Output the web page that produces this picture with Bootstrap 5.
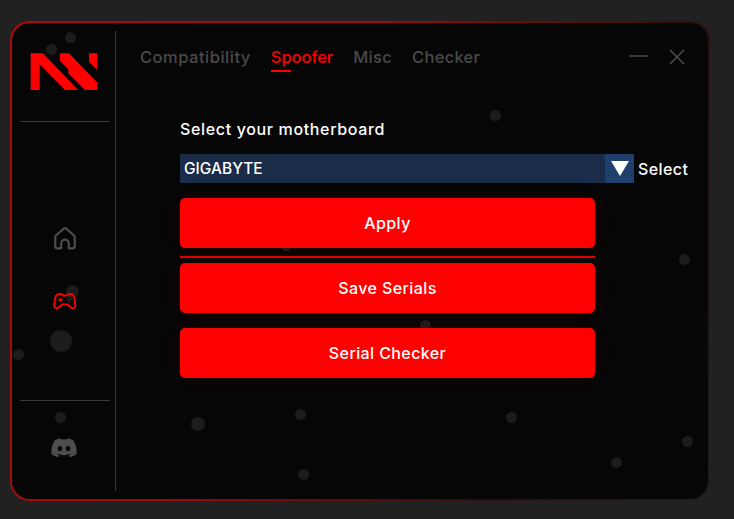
<!DOCTYPE html>
<html lang="en">
<head>
    <meta charset="UTF-8">
    <title>Spoofer</title>
    <link rel="stylesheet" href="https://cdn.jsdelivr.net/npm/bootstrap@5.3.0/dist/css/bootstrap.min.css">
    <style>
        body {
            background: #212121;
            font-family: "Inter", "Open Sans", sans-serif;
            color: #fff;
            height: 519px;
            overflow: hidden;
            padding: 21px 24px 18px 10px;
        }

        .app-window {
            position: relative;
            width: 700px;
            height: 480px;
            border: 2px solid transparent;
            border-radius: 20px;
            background:
                linear-gradient(#060606, #060606) padding-box,
                linear-gradient(115deg, #b00808 0%, #a00a0a 40%, #2a1010 75%, #1e1e1e 100%) border-box;
            overflow: hidden;
        }

        .dot {
            position: absolute;
            border-radius: 50%;
            background: #1c1c1c;
        }

        .side-col {
            position: relative;
            width: 104px;
            height: 460px;
            margin-top: 8px;
            border-right: 1px solid #3a3a3a;
        }

        .logo-box { height: 91px; padding: 22px 0 0 10px; border-bottom: 1px solid #3a3a3a; margin-left: 8px; width: 90px; }
        .logo-box svg { display: block; }

        .side-icons { height: 279px; border-bottom: 1px solid #3a3a3a; margin-left: 8px; width: 90px; padding: 103px 1px 0 0; }
        .pad-icon { margin-top: 39px; }
        .side-bottom { margin-left: 8px; width: 90px; padding: 37px 2px 0 0; }

        .main-col { position: relative; }

        .tab-bar { height: 62px; padding: 22px 23px 0 24px; }
        .tab-nav { gap: 20px; }
        .tab-link {
            color: #4a4a4a;
            font-size: 16.5px;
            font-weight: 450;
            letter-spacing: .3px;
            text-decoration: none;
            position: relative;
            line-height: 24px;
        }
        .tab-link:first-child { letter-spacing: .5px; }
        .tab-link.on { color: #f00; letter-spacing: -.05px; }
        .tab-link.on::after {
            content: "";
            position: absolute;
            left: 0;
            top: 25px;
            width: 20px;
            height: 2px;
            background: #f00;
        }
        .win-btns { gap: 21px; height: 24px; }

        .form-area { width: 520px; margin: 33px 0 0 64px; }
        .form-label-text { font-size: 16px; font-weight: 450; letter-spacing: .65px; line-height: 22px; margin-bottom: 14px; }

        .select-row { margin-bottom: 15px; }
        .board-select { height: 29px; width: 454px; background: #1b2c48; font-size: 15.5px; font-weight: 450; padding-left: 4px; }
        .board-name { padding-top: 1px; }
        .arrow-box { width: 29px; height: 29px; background: #1f3f6c; }
        .select-text { font-size: 16px; font-weight: 450; letter-spacing: .4px; margin-left: 4px; }

        .red-btn {
            display: block;
            width: 415px;
            height: 50px;
            background: #f00;
            border: 0;
            border-radius: 5px;
            color: #fff;
            font-size: 16px;
            font-weight: 450;
            letter-spacing: .4px;
            box-shadow: 0 0 18px rgba(255, 0, 0, .09);
        }
        .red-btn:hover, .red-btn:active { background: #f00 !important; color: #fff !important; }
        .btn-gap { margin-bottom: 15px; }

        .red-rule { width: 415px; height: 2px; background: #e00000; margin: 8px 0 5px; }
    </style>
</head>
<body>
    <div class="app-window d-flex">
        <span class="dot" style="left:34px;top:21px;width:11px;height:11px"></span>
        <span class="dot" style="left:53px;top:9px;width:11px;height:11px"></span>
        <span class="dot" style="left:478px;top:87px;width:11px;height:11px"></span>
        <span class="dot" style="left:269px;top:217px;width:11px;height:11px"></span>
        <span class="dot" style="left:667px;top:231px;width:11px;height:11px"></span>
        <span class="dot" style="left:54px;top:262px;width:13px;height:13px"></span>
        <span class="dot" style="left:38px;top:307px;width:22px;height:22px"></span>
        <span class="dot" style="left:1px;top:326px;width:11px;height:11px"></span>
        <span class="dot" style="left:408px;top:297px;width:11px;height:11px"></span>
        <span class="dot" style="left:43px;top:389px;width:11px;height:11px"></span>
        <span class="dot" style="left:179px;top:394px;width:14px;height:14px"></span>
        <span class="dot" style="left:283px;top:386px;width:11px;height:11px"></span>
        <span class="dot" style="left:494px;top:389px;width:11px;height:11px"></span>
        <span class="dot" style="left:670px;top:413px;width:11px;height:11px"></span>
        <span class="dot" style="left:599px;top:434px;width:11px;height:11px"></span>
        <span class="dot" style="left:286px;top:446px;width:11px;height:11px"></span>

        <div class="side-col flex-shrink-0">
            <div class="logo-box">
                <svg width="68" height="38" viewBox="0 0 68 38">
                    <path fill="#f00" d="M.7.3H13L48 37H35L9.700 11.300V37H.7z"/>
                    <path fill="#f00" d="M30 .3H39L67.300 29.500V37H54.700L38.300 20.300V16.500L30 8z"/>
                    <path fill="#f00" d="M59 .3H67.300V17L59 8.700z"/>
                </svg>
            </div>
            <div class="side-icons d-flex flex-column align-items-center">
                <svg width="26" height="26" viewBox="0 0 24 24" fill="none" stroke="#4d4d4d" stroke-width="2" stroke-linejoin="round">
                    <path d="M5 21.500H8.500V17a3.500 3.500 0 0 1 7 0v4.500H19a2 2 0 0 0 2-2V11.200a2 2 0 0 0-.7-1.500L13.300 3.500a2 2 0 0 0-2.600 0L3.700 9.700a2 2 0 0 0-.7 1.500v8.300a2 2 0 0 0 2 2z"/>
                </svg>
                <svg class="pad-icon" width="24" height="24" viewBox="0 0 26 26" fill="none" stroke="#f00" stroke-width="2" stroke-linejoin="round">
                    <path d="M6.500 4.500h3l1.500 1.500h4l1.500-1.500h3c2 0 3 1.500 3.500 4l1.300 8c.3 2.800-2.800 4.200-4.800 2.500L16 15.500H10L6 19c-2 1.700-5.100.3-4.800-2.500l1.300-8C3 6 4.500 4.500 6.500 4.500z"/>
                    <path stroke-width="1.500" d="M5.500 10.500h5M8 8v5"/>
                    <path stroke-width="1" d="M18 7v2M18 11.500v2M15 10.300h2M19 10.300h2"/>
                </svg>
            </div>
            <div class="side-bottom d-flex justify-content-center">
                <svg width="26" height="20" viewBox="0 0 28 22">
                    <path fill="#4d4d4d" fill-rule="evenodd" d="M23.700 2A23 23 0 0 0 18 .2l-.8 1.500a21 21 0 0 0-6.400 0L10 .2A23 23 0 0 0 4.300 2C.7 7.300-.3 12.500.2 17.600A23 23 0 0 0 7.200 21.200l1.500-2.300-2.300-1.100.6-.5a16.500 16.500 0 0 0 14 0l.6.5-2.300 1.100 1.500 2.300a23 23 0 0 0 7-3.600C28.400 11.700 26.900 6.500 23.700 2zM9.500 14.500c-1.400 0-2.500-1.300-2.500-2.800s1.100-2.800 2.500-2.800 2.500 1.300 2.500 2.800-1.100 2.800-2.500 2.800zm9 0c-1.400 0-2.500-1.300-2.500-2.800s1.100-2.800 2.500-2.800 2.500 1.300 2.500 2.800-1.100 2.800-2.500 2.800z"/>
                </svg>
            </div>
        </div>

        <div class="main-col flex-grow-1">
            <div class="tab-bar d-flex align-items-start">
                <nav class="tab-nav d-flex flex-grow-1">
                    <a class="tab-link" href="#">Compatibility</a>
                    <a class="tab-link on" href="#">Spoofer</a>
                    <a class="tab-link" href="#">Misc</a>
                    <a class="tab-link" href="#">Checker</a>
                </nav>
                <div class="win-btns d-flex align-items-center">
                    <svg width="19" height="16" viewBox="0 0 19 16"><path d="M0 7h19" stroke="#4d4d4d" stroke-width="1.500"/></svg>
                    <svg width="16" height="16" viewBox="0 0 16 16"><path d="M1 1l14 14M15 1L1 15" stroke="#4d4d4d" stroke-width="1.500"/></svg>
                </div>
            </div>
            <div class="form-area">
                <div class="form-label-text">Select your motherboard</div>
                <div class="select-row d-flex align-items-center">
                    <div class="board-select d-flex align-items-center justify-content-between flex-shrink-0">
                        <span class="board-name">GIGABYTE</span>
                        <span class="arrow-box d-flex align-items-center justify-content-center">
                            <svg width="18" height="15" viewBox="0 0 18 15"><path fill="#fff" d="M0 0h18L9 15z"/></svg>
                        </span>
                    </div>
                    <span class="select-text">Select</span>
                </div>
                <button class="btn red-btn" type="button">Apply</button>
                <div class="red-rule"></div>
                <button class="btn red-btn btn-gap" type="button">Save Serials</button>
                <button class="btn red-btn" type="button">Serial Checker</button>
            </div>
        </div>
    </div>
    <script src="https://cdn.jsdelivr.net/npm/bootstrap@5.3.0/dist/js/bootstrap.bundle.min.js"></script>
</body>
</html>
